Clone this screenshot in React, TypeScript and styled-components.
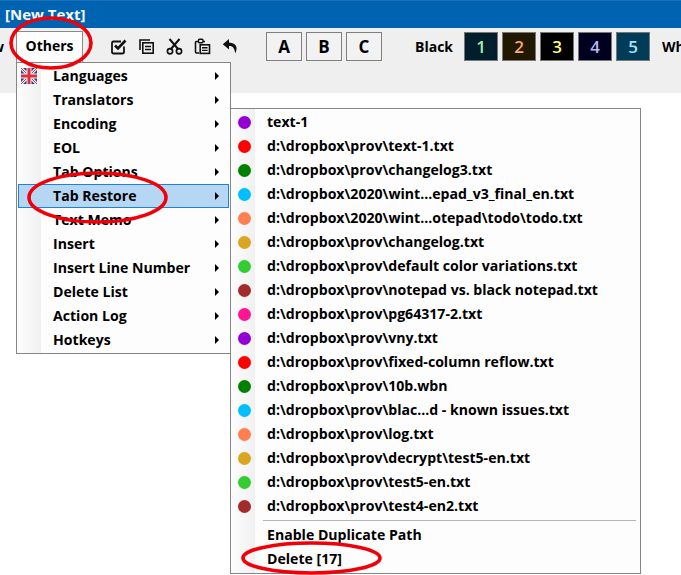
import * as React from 'react';
import styled, { createGlobalStyle } from 'styled-components';

//#region data
const COLORS = ['#9400D3', '#FF0000', '#008000', '#00BFFF', '#FF7F50', '#DAA520', '#32CD32', '#A52A2A', '#FF1493'];

const MAIN_ITEMS = [
  'Languages', 'Translators', 'Encoding', 'EOL', 'Tab Options', 'Tab Restore',
  'Text Memo', 'Insert', 'Insert Line Number', 'Delete List', 'Action Log', 'Hotkeys',
];

const RECENT_FILES = [
  'text-1',
  'd:\\dropbox\\prov\\text-1.txt',
  'd:\\dropbox\\prov\\changelog3.txt',
  'd:\\dropbox\\2020\\wint...epad_v3_final_en.txt',
  'd:\\dropbox\\2020\\wint...otepad\\todo\\todo.txt',
  'd:\\dropbox\\prov\\changelog.txt',
  'd:\\dropbox\\prov\\default color variations.txt',
  'd:\\dropbox\\prov\\notepad vs. black notepad.txt',
  'd:\\dropbox\\prov\\pg64317-2.txt',
  'd:\\dropbox\\prov\\vny.txt',
  'd:\\dropbox\\prov\\fixed-column reflow.txt',
  'd:\\dropbox\\prov\\10b.wbn',
  'd:\\dropbox\\prov\\blac...d - known issues.txt',
  'd:\\dropbox\\prov\\log.txt',
  'd:\\dropbox\\prov\\decrypt\\test5-en.txt',
  'd:\\dropbox\\prov\\test5-en.txt',
  'd:\\dropbox\\prov\\test4-en2.txt',
];

const SWATCHES = [
  { bg: '#001E2B', fg: '#A6F2A6', label: '1' },
  { bg: '#201800', fg: '#FFA96B', label: '2' },
  { bg: '#000000', fg: '#FFFF73', label: '3' },
  { bg: '#00001F', fg: '#B4BCF2', label: '4' },
  { bg: '#003B57', fg: '#A6E2FF', label: '5' },
];
//#endregion

//#region styled
const GlobalStyle = createGlobalStyle`
  html, body {
    margin: 0;
    padding: 0;
    background: #fff;
  }
  body {
    font-family: "Open Sans", "Noto Sans", "Liberation Sans", sans-serif;
    font-weight: 700;
    color: #000;
  }
`;

const Page = styled.div`
  position: relative;
  width: 681px;
  height: 575px;
  overflow: hidden;
  background: #fff;
`;

const TitleBar = styled.div`
  height: 28px;
  box-sizing: border-box;
  padding-left: 5px;
  background: #0063b1;
  border-top: 1px solid #1a72b9;
  color: #f4f8fc;
  font-size: 15px;
  line-height: 27px;
`;

const Toolbar = styled.div`
  height: 65px;
  box-sizing: border-box;
  padding-top: 4px;
  background: #efefef;
  display: flex;
  align-items: flex-start;
  font-size: 14px;
  white-space: nowrap;
  & > * {
    flex: none;
  }
`;

const ClippedLabel = styled.span`
  width: 16px;
  margin-left: -8px;
  margin-top: 5px;
  margin-right: 8px;
`;

const ActiveTab = styled.div`
  width: 67px;
  height: 31px;
  margin-top: -1px;
  box-sizing: border-box;
  border: 1px solid #8a8a8a;
  border-bottom: none;
  background: #fdfdfd;
  text-align: center;
  line-height: 28px;
`;

const IconGroup = styled.div`
  display: flex;
  gap: 11px;
  margin-left: 27px;
  margin-top: 6px;
`;

const LetterGroup = styled.div`
  display: flex;
  gap: 4px;
  margin-left: 27px;
`;

const LetterButton = styled.div`
  width: 36px;
  height: 29px;
  box-sizing: border-box;
  border: 1px solid #7f7f7f;
  background: #f2f2f2;
  text-align: center;
  font-size: 17px;
  line-height: 27px;
`;

const ThemeLabel = styled.span<{ $left: number }>`
  margin-left: ${(p) => p.$left}px;
  margin-top: 5px;
`;

const SwatchGroup = styled.div`
  display: flex;
  gap: 4px;
  margin-left: 11px;
`;

const Swatch = styled.div<{ $bg: string; $fg: string }>`
  width: 34px;
  height: 29px;
  box-sizing: border-box;
  border: 1px solid #777;
  background: ${(p) => p.$bg};
  color: ${(p) => p.$fg};
  text-align: center;
  font-size: 17px;
  font-weight: 600;
  line-height: 27px;
`;

const Menu = styled.div<{ $left: number; $top: number; $width: number; $height: number }>`
  position: absolute;
  left: ${(p) => p.$left}px;
  top: ${(p) => p.$top}px;
  width: ${(p) => p.$width}px;
  height: ${(p) => p.$height}px;
  box-sizing: border-box;
  border: 1px solid #858585;
  padding: 1px;
  background: linear-gradient(to right, #fdfdfd 0, #f0f0f0 24px, #fdfdfd 24px);
  font-size: 14.1px;
`;

const Item = styled.div<{ $active?: boolean }>`
  position: relative;
  height: 24px;
  box-sizing: border-box;
  padding-left: 34px;
  line-height: 21px;
  white-space: nowrap;
  border: 1px solid ${(p) => (p.$active ? '#1e82dc' : 'transparent')};
  background: ${(p) => (p.$active ? '#b5d7f4' : 'transparent')};
`;

const Arrow = styled.span`
  position: absolute;
  right: 9px;
  top: 7px;
  width: 0;
  height: 0;
  border-left: 4px solid #000;
  border-top: 4px solid transparent;
  border-bottom: 4px solid transparent;
`;

const FlagSlot = styled.span`
  position: absolute;
  left: 2px;
  top: 3px;
  width: 16px;
  height: 16px;
`;

const FileRow = styled.div`
  display: flex;
  align-items: center;
  height: 24px;
  white-space: nowrap;
`;

const FilePath = styled.span`
  margin-top: -2px;
`;

const Dot = styled.span<{ $color: string }>`
  width: 13px;
  height: 13px;
  margin-left: 6px;
  margin-right: 16px;
  border-radius: 50%;
  background: ${(p) => p.$color};
  flex: none;
`;

const Separator = styled.div`
  height: 1px;
  margin: 2px 3px 2px 31px;
  background: #b4b4b4;
`;

const PlainRow = styled.div`
  height: 24px;
  padding-left: 35px;
  line-height: 23px;
  white-space: nowrap;
`;

const Ring = styled.svg<{ $left: number; $top: number }>`
  position: absolute;
  left: ${(p) => p.$left}px;
  top: ${(p) => p.$top}px;
  overflow: visible;
  pointer-events: none;
`;
//#endregion

const CheckIcon = () => (
  <svg width="17" height="17" viewBox="0 0 17 17">
    <path d="M14 8.5V14a1.5 1.5 0 0 1-1.5 1.5h-9A1.5 1.5 0 0 1 2 14V5a1.5 1.5 0 0 1 1.5-1.5H11" fill="none" stroke="#111" strokeWidth="1.8" />
    <path d="M5 7.5l3 3 7.5-8" fill="none" stroke="#111" strokeWidth="2.6" />
  </svg>
);

const CopyIcon = () => (
  <svg width="17" height="17" viewBox="0 0 17 17">
    <path d="M2 12V2h10" fill="none" stroke="#111" strokeWidth="1.6" />
    <rect x="4.8" y="4.8" width="10.4" height="10.4" fill="#efefef" stroke="#111" strokeWidth="1.6" />
    <path d="M7 8.5h6M7 11.5h6" stroke="#111" strokeWidth="1.5" />
  </svg>
);

const CutIcon = () => (
  <svg width="17" height="17" viewBox="0 0 17 17">
    <path d="M3.5 1l9 10.5M13.5 1l-9 10.5" fill="none" stroke="#111" strokeWidth="2" />
    <circle cx="4" cy="13.2" r="2.6" fill="none" stroke="#111" strokeWidth="1.7" />
    <circle cx="13" cy="13.2" r="2.6" fill="none" stroke="#111" strokeWidth="1.7" />
  </svg>
);

const PasteIcon = () => (
  <svg width="17" height="17" viewBox="0 0 17 17">
    <path d="M5 15H2.5a1 1 0 0 1-1-1V4.5a1 1 0 0 1 1-1H11" fill="none" stroke="#111" strokeWidth="1.6" />
    <rect x="4.5" y="1.2" width="4.5" height="3.6" rx="1" fill="#efefef" stroke="#111" strokeWidth="1.4" />
    <rect x="6.2" y="6.8" width="9.3" height="8.6" fill="#efefef" stroke="#111" strokeWidth="1.6" />
    <path d="M8 9.8h5.6M8 12.4h5.6" stroke="#111" strokeWidth="1.4" />
  </svg>
);

const UndoIcon = () => (
  <svg width="17" height="17" viewBox="0 0 17 17">
    <path d="M7 1L0.8 6.2 7 11.4V8c3.6 0 5.4 1.4 6.2 7.4 2.8-5.4 1.8-10.4-6.2-11z" fill="#111" />
  </svg>
);

const UkFlag = () => (
  <svg width="16" height="16" viewBox="0 0 16 16">
    <rect width="16" height="16" fill="#2b3f8c" />
    <path d="M0 0l16 16M16 0L0 16" stroke="#f4f0f2" strokeWidth="3" />
    <path d="M0 0l16 16M16 0L0 16" stroke="#d8323f" strokeWidth="1" />
    <path d="M8 0v16M0 8h16" stroke="#f4f0f2" strokeWidth="5" />
    <path d="M8 0v16M0 8h16" stroke="#d8323f" strokeWidth="3" />
  </svg>
);

const RedRing = ({ left, top, width, height }: { left: number; top: number; width: number; height: number }) => (
  <Ring $left={left} $top={top} width={width} height={height} viewBox={`0 0 ${width} ${height}`}>
    <ellipse cx={width / 2} cy={height / 2} rx={width / 2 - 2} ry={height / 2 - 2} fill="none" stroke="#f00008" strokeWidth="3.6" />
  </Ring>
);

export default function App() {
  return (
    <Page>
      <GlobalStyle />
      <TitleBar>[New Text]</TitleBar>
      <Toolbar>
        <ClippedLabel>w</ClippedLabel>
        <ActiveTab>Others</ActiveTab>
        <IconGroup>
          <CheckIcon />
          <CopyIcon />
          <CutIcon />
          <PasteIcon />
          <UndoIcon />
        </IconGroup>
        <LetterGroup>
          <LetterButton>A</LetterButton>
          <LetterButton>B</LetterButton>
          <LetterButton>C</LetterButton>
        </LetterGroup>
        <ThemeLabel $left={33}>Black</ThemeLabel>
        <SwatchGroup>
          {SWATCHES.map((s) => (
            <Swatch key={s.label} $bg={s.bg} $fg={s.fg}>{s.label}</Swatch>
          ))}
        </SwatchGroup>
        <ThemeLabel $left={12}>White</ThemeLabel>
      </Toolbar>

      <Menu $left={16} $top={62} $width={215} $height={292}>
        {MAIN_ITEMS.map((label, i) => (
          <Item key={label} $active={label === 'Tab Restore'}>
            {i === 0 && <FlagSlot><UkFlag /></FlagSlot>}
            {label}
            <Arrow />
          </Item>
        ))}
      </Menu>

      <Menu $left={230} $top={108} $width={411} $height={466}>
        {RECENT_FILES.map((path, i) => (
          <FileRow key={path}>
            <Dot $color={COLORS[i % COLORS.length]} />
            <FilePath>{path}</FilePath>
          </FileRow>
        ))}
        <Separator />
        <PlainRow>Enable Duplicate Path</PlainRow>
        <PlainRow>Delete [17]</PlainRow>
      </Menu>

      <RedRing left={9} top={16} width={84} height={54} />
      <RedRing left={27} top={171} width={141} height={53} />
      <RedRing left={241} top={541} width={141} height={34} />
    </Page>
  );
}
